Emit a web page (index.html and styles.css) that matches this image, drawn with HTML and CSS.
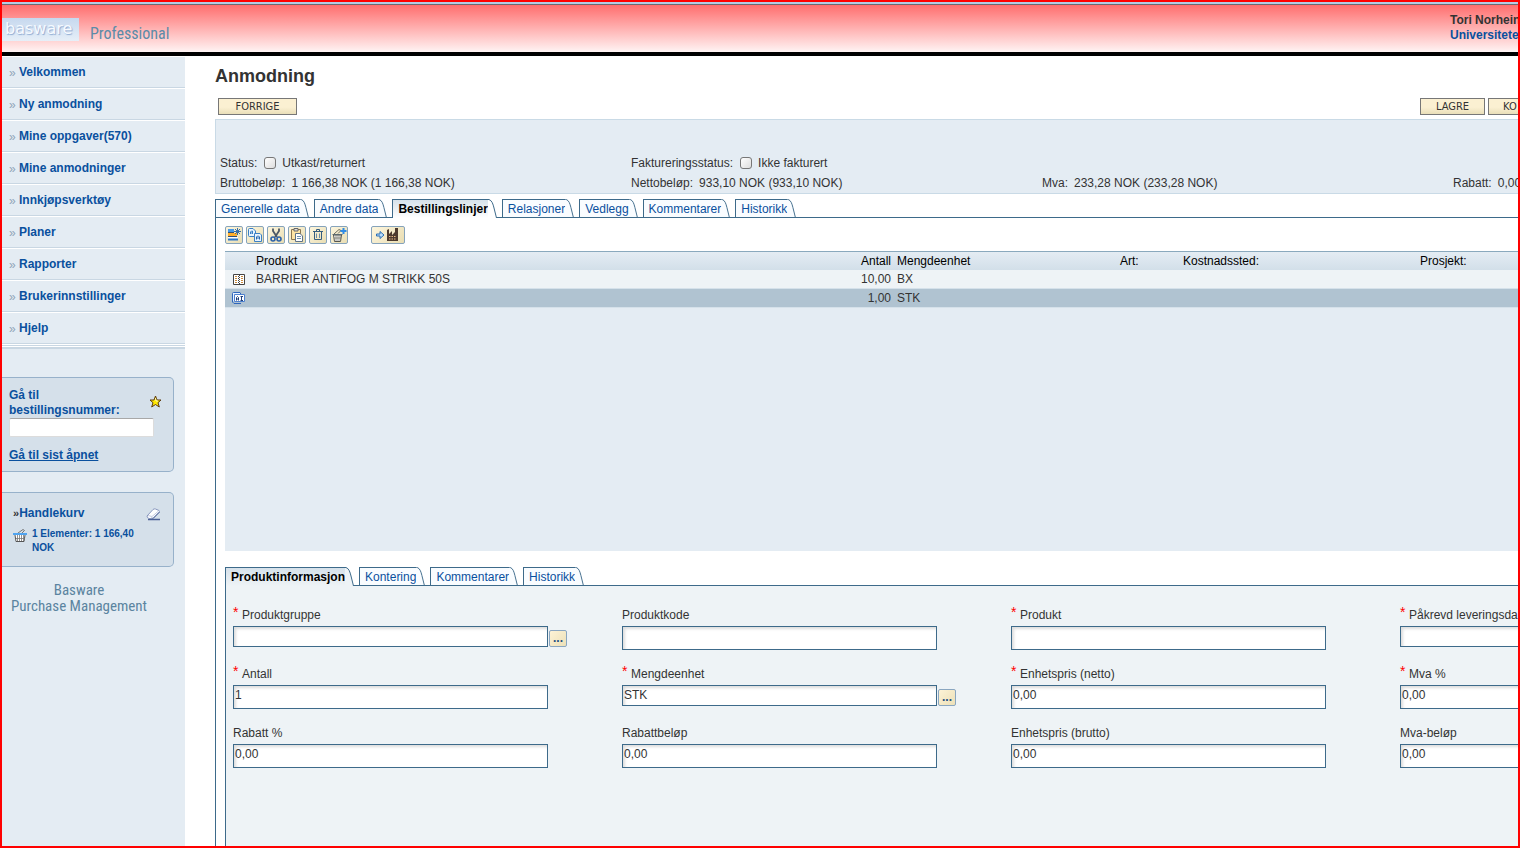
FILE: index.html
```html
<!DOCTYPE html>
<html lang="no">
<head>
<meta charset="utf-8">
<title>Anmodning</title>
<link rel="stylesheet" href="styles.css">
</head>
<body class="app">
<svg class="defs" aria-hidden="true">
  <symbol id="tab-end" viewBox="0 0 9 19">
    <path d="M0 0H1C4 1 5 4 6 8L8.500 19H0Z" fill="var(--tab-fill)"/>
    <path d="M0 .5H1C4 1.500 5 5 6 9L8.500 19" fill="none" stroke="#3d6a8a"/>
  </symbol>
</svg>

<header class="topbar">
  <div class="logo">basware</div>
  <div class="edition">Professional</div>
  <div class="user"><span>Tori Norhein</span><a href="#">Universitete</a></div>
</header>

<div class="body">
  <aside class="sidebar">
    <nav class="menu">
      <a href="#"><i>»</i>Velkommen</a>
      <a href="#"><i>»</i>Ny anmodning</a>
      <a href="#"><i>»</i>Mine oppgaver(570)</a>
      <a href="#"><i>»</i>Mine anmodninger</a>
      <a href="#"><i>»</i>Innkjøpsverktøy</a>
      <a href="#"><i>»</i>Planer</a>
      <a href="#"><i>»</i>Rapporter</a>
      <a href="#"><i>»</i>Brukerinnstillinger</a>
      <a href="#"><i>»</i>Hjelp</a>
    </nav>
    <section class="box goto">
      <div class="box-row">
        <label for="ordernr">Gå til<br>bestillingsnummer:</label>
        <svg class="star" viewBox="0 0 13 13"><path d="M6.500 1L8 5H12L9 7.700L10.300 12L6.500 9.500L2.700 12L4 7.700L1 5H5Z" fill="#ffe800" stroke="#5c3a10"/><path d="M6.500 3L7 6H9" fill="none" stroke="#fffbb0"/></svg>
      </div>
      <input id="ordernr" type="text" class="order-input">
      <a href="#" class="last">Gå til sist åpnet</a>
    </section>
    <section class="box cart">
      <div class="box-row">
        <a href="#" class="cart-title"><i>»</i>Handlekurv</a>
        <svg class="eraser" viewBox="0 0 15 14"><path d="M2 12.500H14" stroke="#4a5f94" stroke-width="1.500"/><path d="M1 9L7 2.500Q8 1.500 9.500 2L13 3.500Q14 4.500 13 5.500L7 11.500H3Q1 11 1 9Z" fill="#fff" stroke="#8796bd"/><path d="M2 8.500L6 9.500L12.500 4" fill="none" stroke="#c5cde2"/><path d="M6 10.500L7 11.500L13.500 5" fill="none" stroke="#51669b"/></svg>
      </div>
      <div class="cart-line">
        <svg class="basket" viewBox="0 0 14 13"><path d="M5 4L10 .5L11.500 1.500L9 4" fill="none" stroke="#777"/><path d="M2 6L3 12.500H11L12 6" fill="#fff" stroke="#555"/><path d="M4.500 6V12M6.500 6V12M8.500 6V12M10.500 6V12M3 9.500H12" stroke="#777" stroke-width=".8"/><path d="M0 5H14" stroke="#4fa3ef" stroke-width="2"/></svg>
        <a href="#">1 Elementer: 1 166,40 NOK</a>
      </div>
    </section>
    <div class="brand">Basware<br>Purchase Management</div>
  </aside>

  <main class="main">
    <h1>Anmodning</h1>
    <div class="actions">
      <button class="btn prev">FORRIGE</button>
      <div class="actions-right"><button class="btn">LAGRE</button><button class="btn">KO</button></div>
    </div>

    <section class="summary">
      <div><label for="st">Status:</label><input type="checkbox" id="st"><span>Utkast/returnert</span></div>
      <div><label for="fs">Faktureringsstatus:</label><input type="checkbox" id="fs"><span>Ikke fakturert</span></div>
      <div></div>
      <div></div>
      <div>Bruttobeløp:<b>1 166,38 NOK (1 166,38 NOK)</b></div>
      <div>Nettobeløp:<b>933,10 NOK (933,10 NOK)</b></div>
      <div>Mva:<b>233,28 NOK (233,28 NOK)</b></div>
      <div>Rabatt:<b>0,00</b></div>
    </section>

    <div class="tabs">
      <button class="tab"><span>Generelle data</span><svg><use href="#tab-end"/></svg></button>
      <button class="tab"><span>Andre data</span><svg><use href="#tab-end"/></svg></button>
      <button class="tab active"><span>Bestillingslinjer</span><svg><use href="#tab-end"/></svg></button>
      <button class="tab"><span>Relasjoner</span><svg><use href="#tab-end"/></svg></button>
      <button class="tab"><span>Vedlegg</span><svg><use href="#tab-end"/></svg></button>
      <button class="tab"><span>Kommentarer</span><svg><use href="#tab-end"/></svg></button>
      <button class="tab"><span>Historikk</span><svg><use href="#tab-end"/></svg></button>
    </div>

    <section class="panel">
      <div class="toolbar">
        <button class="tool" aria-label="Ny linje"><svg viewBox="0 0 16 16"><path d="M2 2H8V5H2Z" fill="#4a9ae6"/><path d="M2 6H11V9H2Z" fill="#ffae2b"/><path d="M2 5.500H8M2 9.500H11" stroke="#314f78"/><path d="M2 10H12V12H2Z" fill="#fff"/><path d="M2 12.500H12" stroke="#2b75c8" stroke-width="2"/><path d="M11.500 1V8M8 4.500H15M9 2L14 7M14 2L9 7" stroke="#3a6ea5"/></svg></button>
        <button class="tool" aria-label="Dupliser"><svg viewBox="0 0 16 16"><path d="M1.500 2.500Q1.500 1.500 2.500 1.500H6L8.500 4V9.500H2.500Q1.500 9.500 1.500 8.500Z" fill="#e8f4ff" stroke="#3b80c4"/><path d="M3.500 7V5L4.500 4H5.500V7M3.500 6H5.500" fill="none" stroke="#3b80c4"/><path d="M7.500 6.500H13L14.500 8V14.500H7.500Z" fill="#e8f4ff" stroke="#3b80c4"/><path d="M9.500 12.500V10L10.500 9H11.500L12.500 10V12.500M9.500 11H12.500" fill="none" stroke="#2868ae"/></svg></button>
        <button class="tool" aria-label="Klipp ut"><svg viewBox="0 0 16 16"><path d="M5 1.500V4L9 10M11 1.500V4L7 10" fill="none" stroke="#4d5966" stroke-width="1.800"/><circle cx="5" cy="12" r="2" fill="none" stroke="#2d62a8" stroke-width="1.600"/><circle cx="11" cy="12" r="2" fill="none" stroke="#2d62a8" stroke-width="1.600"/></svg></button>
        <button class="tool" aria-label="Lim inn"><svg viewBox="0 0 16 16"><path d="M2.500 2.500H11.500V12.500H2.500Z" fill="#ffe4a4" stroke="#8a7652"/><path d="M5 1.500H9V4H5Z" fill="#ddd" stroke="#666"/><path d="M6.500 6.500H11L13.500 9V14.500H6.500Z" fill="#fff" stroke="#5e7288"/><path d="M8 9.500H12M8 11.500H12" stroke="#7090b0"/></svg></button>
        <button class="tool" aria-label="Slett"><svg viewBox="0 0 16 16"><path d="M3 4.500H13M6.500 4V2.500H9.500V4M4.500 5V12.500H11.500V5" fill="none" stroke="#345d80"/><path d="M6.500 6.500V11M9.500 6.500V11" stroke="#6c8da8"/></svg></button>
        <button class="tool" aria-label="Legg i handlekurv"><svg viewBox="0 0 16 16"><path d="M3 7L8 2.500L10 3.500L7 6.500" fill="none" stroke="#6a6a60"/><path d="M2.500 8L3.500 14.500H9.500L10.500 8Z" fill="#fff" stroke="#55564e"/><path d="M1.500 7.500H11.500" stroke="#5c6a70"/><path d="M5 8V14M7 8V14M9 8V14M3 11H10" stroke="#77776c" stroke-width=".8"/><path d="M12.500 1V7M9.500 4H15.500" stroke="#2f8be6" stroke-width="2"/></svg></button>
        <button class="tool wide" aria-label="Send til leverandør"><svg viewBox="0 0 32 16"><path d="M4.500 7H8V4.500L12 8L8 11.500V9H4.500Z" fill="#b9dcfa" stroke="#2b6fb5"/><path d="M15 14V3L17 2V7L20 4V8L23 5V1H26V14Z" fill="#4d3a2e"/><path d="M17 9.500H24M17 12H24" stroke="#e8b884" stroke-dasharray="1.500 1"/></svg></button>
      </div>

      <div class="lines">
        <table>
          <colgroup><col class="c-icon"><col class="c-prod"><col class="c-ant"><col class="c-unit"><col class="c-art"><col class="c-cost"><col></colgroup>
          <thead><tr><th></th><th>Produkt</th><th class="num">Antall</th><th>Mengdeenhet</th><th>Art:</th><th>Kostnadssted:</th><th>Prosjekt:</th></tr></thead>
          <tbody>
            <tr><td><svg class="rowicon" viewBox="0 0 13 13"><path d="M1.500 1.500H12.500V11.500H1.500Z" fill="#fff" stroke="#444"/><path d="M3 3.500H5M3 5.500H5M3 7.500H5M3 9.500H5M9 3.500H11M9 5.500H11M9 7.500H11M9 9.500H11" stroke="#c98a3c"/><path d="M6.500 1V12M7.500 2V12" stroke="#444" stroke-dasharray="1 1"/></svg></td><td>BARRIER ANTIFOG M STRIKK 50S</td><td class="num">10,00</td><td>BX</td><td></td><td></td><td></td></tr>
            <tr class="selected"><td><svg class="rowicon" viewBox="0 0 13 13"><path d="M.5 10V1.500Q.5 .5 1.500 .5H8L9 2.500" fill="#e8f2ff" stroke="#2e66bd"/><path d="M.5 4V10L2 11.500H9" fill="none" stroke="#2e66bd"/><path d="M2.500 2.500H12.500V9.500H2.500Z" fill="#fff" stroke="#4d80cf"/><path d="M4.500 8.500V5.500L5.500 4.500L6.500 5.500V8.500M4.500 7H6.500M8.500 4.500H11M8.500 8.500H11M9.500 4.500V8.500" fill="none" stroke="#1f3f7a"/></svg></td><td></td><td class="num">1,00</td><td>STK</td><td></td><td></td><td></td></tr>
          </tbody>
        </table>
      </div>

      <div class="tabs">
        <button class="tab active soft"><span>Produktinformasjon</span><svg><use href="#tab-end"/></svg></button>
        <button class="tab"><span>Kontering</span><svg><use href="#tab-end"/></svg></button>
        <button class="tab"><span>Kommentarer</span><svg><use href="#tab-end"/></svg></button>
        <button class="tab"><span>Historikk</span><svg><use href="#tab-end"/></svg></button>
      </div>

      <form class="details">
        <div class="field"><label for="f1"><em>*</em>Produktgruppe</label><div class="pick"><input id="f1" type="text"><button type="button" aria-label="Velg produktgruppe"><span>...</span></button></div></div>
        <div class="field"><label for="f2">Produktkode</label><input id="f2" type="text"></div>
        <div class="field"><label for="f3"><em>*</em>Produkt</label><input id="f3" type="text"></div>
        <div class="field"><label for="f4"><em>*</em>Påkrevd leveringsda</label><div class="pick"><input id="f4" type="text"></div></div>
        <div class="field"><label for="f5"><em>*</em>Antall</label><input id="f5" type="text" value="1"></div>
        <div class="field"><label for="f6"><em>*</em>Mengdeenhet</label><div class="pick"><input id="f6" type="text" value="STK"><button type="button" aria-label="Velg mengdeenhet"><span>...</span></button></div></div>
        <div class="field"><label for="f7"><em>*</em>Enhetspris (netto)</label><input id="f7" type="text" value="0,00"></div>
        <div class="field"><label for="f8"><em>*</em>Mva %</label><input id="f8" type="text" value="0,00"></div>
        <div class="field"><label for="f9">Rabatt %</label><input id="f9" type="text" value="0,00"></div>
        <div class="field"><label for="f10">Rabattbeløp</label><input id="f10" type="text" value="0,00"></div>
        <div class="field"><label for="f11">Enhetspris (brutto)</label><input id="f11" type="text" value="0,00"></div>
        <div class="field"><label for="f12">Mva-beløp</label><input id="f12" type="text" value="0,00"></div>
      </form>
    </section>
  </main>
</div>
</body>
</html>
```
FILE: styles.css
```css
* { box-sizing: border-box; }
.app {
  --line: #3d6a8a;
  --link: #0a509e;
  --pale: #e4ecf3;
  margin: 0;
  min-height: 100vh;
  border: 2px solid #f00;
  display: flex;
  flex-direction: column;
  overflow-x: hidden;
  background: #fff;
  color: #333;
  font: 12px/16px "Liberation Sans", Arial, sans-serif;
}
.defs { display: none; }
a { color: var(--link); text-decoration: none; }
button, input { font: inherit; color: inherit; }
i { font-style: normal; }

.topbar {
  display: flex;
  align-items: flex-start;
  height: 54px;
  padding-top: 14px;
  border-top: 2px solid #b4cbe4;
  border-bottom: 4px solid #000;
  background: linear-gradient(#6a6a72 1px, #ff6e6e 1px, #fff4f4);
}
.logo {
  width: 77px;
  height: 23px;
  padding-left: 3px;
  background: linear-gradient(#c6d8ee, #e6eff8);
  color: #f6faff;
  font: 16px/22px "DejaVu Sans", sans-serif;
  text-shadow: 1px 1px 1px #8fabd2;
}
.edition {
  margin-left: 11px;
  color: #5b8ba8;
  font: 16px/32px "Roboto Condensed", "Liberation Sans Narrow", Roboto, sans-serif;
}
.user {
  width: 68px;
  margin-left: auto;
  white-space: nowrap;
  font-weight: bold;
  line-height: 15px;
  display: flex;
  flex-direction: column;
  margin-top: -5px;
}

.body { flex: 1; display: flex; }
.sidebar { width: 183px; flex: none; background: var(--pale); border-top: 1px solid #fff; }
.menu { border-bottom: 2px solid #c9d7e3; padding-bottom: 1px; }
.menu::after { content: ""; display: block; height: 1px; background: #c9d7e3; box-shadow: 0 1px #fff; }
.menu a {
  display: flex;
  height: 32px;
  padding: 7px 0 0 7px;
  border-bottom: 1px solid #fff;
  box-shadow: inset 0 -1px #c9d7e3;
  font-weight: bold;
}
.menu i { width: 10px; padding-top: 1px; color: #8fa5b8; font-weight: normal; }
.box {
  width: 172px;
  border: 1px solid #97b1ca;
  border-left: 0;
  border-radius: 0 5px 5px 0;
  background: #d5e0ea;
  font-weight: bold;
  color: var(--link);
}
.box-row { display: flex; justify-content: space-between; }
.goto { height: 95px; margin-top: 28px; padding: 10px 11px 0 7px; line-height: 15px; }
.star { width: 13px; height: 13px; margin-top: 7px; }
.order-input {
  display: block;
  width: 145px;
  height: 19px;
  margin: 0 0 10px;
  border: 1px solid #dcdcdc;
  border-top-color: #a8a8a8;
  border-radius: 2px;
  background: #fff;
}
.last { text-decoration: underline; line-height: 16px; }
.cart { height: 75px; margin-top: 20px; padding: 12px 12px 0 11px; }
.cart-title i { font-size: 11px; color: #333; }
.eraser { width: 15px; height: 14px; margin-top: 2px; }
.cart-line { display: flex; gap: 5px; font-size: 10px; line-height: 14px; margin-top: 6px; }
.cart-line a { max-width: 116px; }
.basket { flex: none; width: 14px; height: 13px; margin-top: 2px; }
.brand {
  margin-top: 15px;
  padding-right: 29px;
  text-align: center;
  color: #5b84a0;
  font: 15px/16px "Roboto Condensed", "Liberation Sans Narrow", Roboto, sans-serif;
}

.main {
  flex: 1;
  min-width: 0;
  padding-left: 30px;
  overflow: hidden;
  display: flex;
  flex-direction: column;
}
h1 { margin: 10px 0 11px; font-size: 18px; line-height: 21px; }
.actions { display: flex; justify-content: space-between; padding-left: 3px; margin-bottom: 4px; }
.actions-right { display: flex; gap: 3px; width: 98px; overflow: hidden; }
.btn {
  flex: none;
  width: 65px;
  height: 17px;
  padding: 0;
  border: 1px solid #777;
  background: linear-gradient(#fbf0d2 55%, #e9dfb9);
  font: 11px/14px "DejaVu Sans Condensed", "DejaVu Sans", sans-serif;
}
.btn + .btn { padding-left: 14px; text-align: left; }
.prev { width: 79px; }

.summary {
  display: grid;
  grid-template-columns: repeat(4, 411px);
  grid-auto-rows: 20px;
  height: 75px;
  padding: 33px 0 0 4px;
  border: 1px solid #c9dae6;
  border-right: 0;
  background: var(--pale);
}
.summary div { display: flex; align-items: center; white-space: nowrap; }
.summary b { font-weight: normal; margin-left: 6px; }
.summary input {
  appearance: none;
  width: 12px;
  height: 12px;
  margin: 0 6px 0 7px;
  border: 1px solid #777;
  border-radius: 3px;
  background: linear-gradient(135deg, #fff, #ddd);
}

.tabs { display: flex; gap: 5px; flex: none; height: 18px; position: relative; }
.main > .tabs { margin-top: 5px; }
.tab {
  --tab-fill: #f9fcff;
  display: flex;
  height: 18px;
  padding: 0;
  border: 0;
  background: none;
  color: var(--link);
}
.tab span {
  height: 18px;
  padding: 0 0 0 5px;
  border: solid var(--line);
  border-width: 1px 0 0 1px;
  background: var(--tab-fill);
  line-height: 18px;
}
.tab svg { width: 9px; height: 18px; }
.tab use { width: 9px; height: 19px; }
.tab.active { --tab-fill: #fff; height: 19px; color: #000; font-weight: bold; }
.tab.active span { height: 19px; background: linear-gradient(#d6e1ea, #fff); }
.tab.active svg { height: 19px; }
.tab.soft { --tab-fill: #eef3f6; }
.tab.soft span { background: linear-gradient(#d6e1ea, #eef3f6); }

.panel {
  flex: 1;
  display: flex;
  flex-direction: column;
  padding: 8px 0 0 9px;
  border: solid var(--line);
  border-width: 1px 0 0 1px;
}
.toolbar { display: flex; gap: 3px; margin-bottom: 7px; }
.tool {
  width: 18px;
  height: 18px;
  padding: 0;
  border: 1px solid #86a3bb;
  border-radius: 2px;
  background: linear-gradient(135deg, #fdf6de, #e9ddb2);
}
.tool svg { display: block; width: 16px; height: 16px; }
.tool.wide { width: 34px; margin-left: 20px; }
.tool.wide svg { width: 32px; }

.lines { height: 300px; margin-bottom: 16px; background: var(--pale); border-top: 1px solid #8aa9bd; }
table { width: 100%; border-collapse: collapse; table-layout: fixed; }
th, td { height: 18px; padding: 0; text-align: left; font-weight: normal; white-space: nowrap; line-height: 18px; }
th { color: #000; }
thead tr { background: linear-gradient(#e4ecf3, #d2dfe9); }
tbody tr { background: #eef3f6; border-bottom: 1px solid #d5e1ea; }
tbody .selected { background: #b0c3d1; }
.num { text-align: right; padding-right: 6px; }
.c-icon { width: 31px; }
.c-prod { width: 541px; }
.c-ant { width: 100px; }
.c-unit { width: 223px; }
.c-art { width: 63px; }
.c-cost { width: 237px; }
.rowicon { display: block; width: 13px; height: 13px; margin-left: 7px; }

.details {
  flex: 1;
  display: grid;
  grid-template-columns: repeat(4, 389px);
  grid-auto-rows: 59px;
  padding: 21px 0 0 7px;
  border: solid var(--line);
  border-width: 1px 0 0 1px;
  background: #eef3f6;
}
.field label { display: flex; height: 16px; margin-bottom: 3px; white-space: nowrap; }
.field em { width: 9px; color: #f00; font: 14px/11px "Liberation Sans", Arial, sans-serif; }
.field input {
  display: block;
  width: 315px;
  height: 24px;
  padding: 0 1px 5px;
  border: 1px solid var(--line);
  background: #fff;
  box-shadow: inset 2px 2px 3px #ddd;
}
.pick { display: flex; gap: 1px; align-items: flex-end; }
.pick input { height: 21px; padding-bottom: 2px; }
.pick button {
  width: 18px;
  height: 17px;
  padding: 0;
  border: 1px solid #8aa6c0;
  border-radius: 2px;
  background: linear-gradient(135deg, #fdf3d6, #ece0b8);
  color: #1f4f80;
  font-weight: bold;
  line-height: 13px;
}
```
